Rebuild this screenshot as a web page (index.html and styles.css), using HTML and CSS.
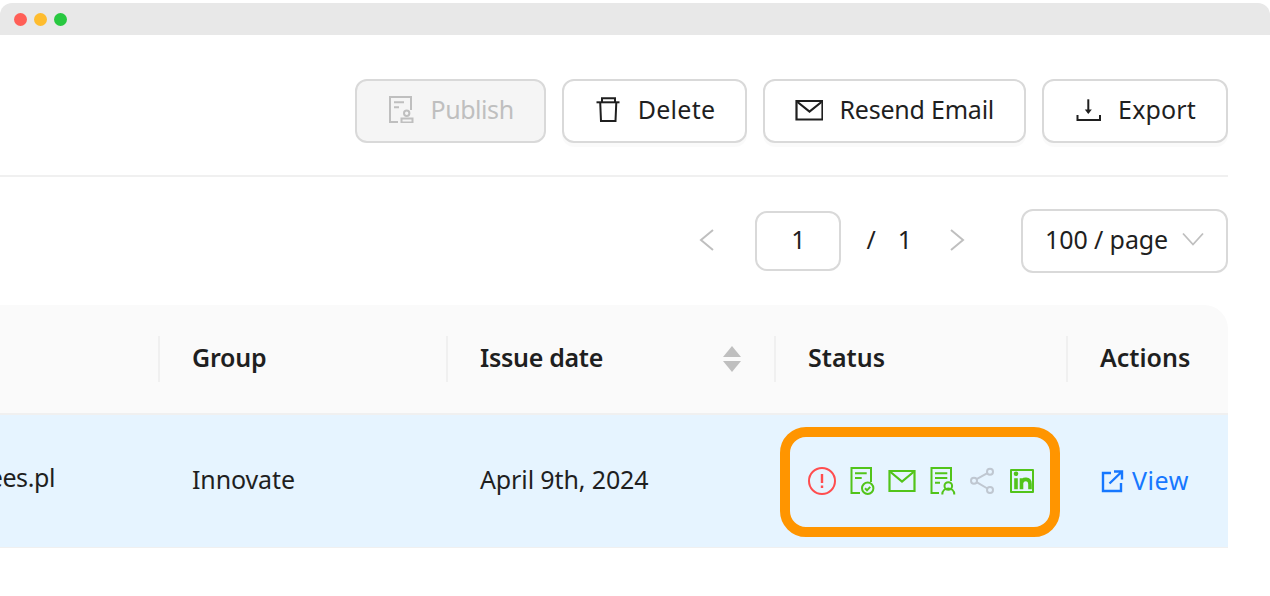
FILE: index.html
```html
<!DOCTYPE html>
<html lang="en">
<head>
<meta charset="utf-8">
<title>Certificates</title>
<link rel="stylesheet" href="styles.css">
</head>
<body>
<div class="titlebar">
  <span class="light light-red"></span>
  <span class="light light-yellow"></span>
  <span class="light light-green"></span>
</div>
<main class="content">
  <div class="toolbar">
    <button class="btn btn-disabled">
      <svg class="icon" viewBox="-1 -1 28 28" fill="none" stroke="currentColor" stroke-width="2"><path d="M10 26H2V1h21v13"/><path d="M6 6.300h10M6 11.300h5"/><circle cx="18.700" cy="17.300" r="2.700"/><path d="M13.500 22.500h11v4h-11z"/></svg>
      <span class="t-publish">Publish</span>
    </button>
    <button class="btn">
      <svg class="icon" viewBox="-1 -1 28 28" fill="none" stroke="currentColor" stroke-width="2"><path d="M1.500 6.300h23"/><path d="M7 6.300V2.300h13v4"/><path d="M5.200 6.300L6 25h14.500l.8-18.700"/></svg>
      <span class="t-delete">Delete</span>
    </button>
    <button class="btn">
      <svg class="icon" viewBox="-1 -1 28 28" fill="none" stroke="currentColor" stroke-width="2.200"><path d="M.5 5h26v18.500H.5z"/><path d="M1.500 6l12 9.500 12-9.500"/></svg>
      <span class="t-resend">Resend Email</span>
    </button>
    <button class="btn">
      <svg class="icon" viewBox="-1 -1 28 28" fill="none" stroke="currentColor" stroke-width="2"><path d="M13.300 3.300v13"/><path d="M9.800 13.500h7l-3.500 4.500z" fill="currentColor" stroke="none"/><path d="M2.500 19v5h22.500v-5"/></svg>
      <span class="t-export">Export</span>
    </button>
  </div>
  <hr class="divider">
  <div class="pagination">
    <svg class="chev" viewBox="0 0 28 28" fill="none" stroke="currentColor" stroke-width="2"><path d="M20 4L8 14l12 10"/></svg>
    <div class="page-input">1</div>
    <span class="page-sep">/</span>
    <span class="page-total">1</span>
    <svg class="chev chev-next" viewBox="0 0 28 28" fill="none" stroke="currentColor" stroke-width="2"><path d="M8 4l12 10L8 24"/></svg>
    <div class="page-size">
      <span class="t-size">100 / page</span>
      <svg class="size-caret" viewBox="0 0 22 14" fill="none" stroke="currentColor" stroke-width="1.800"><path d="M1 1.500l10 11 10-11"/></svg>
    </div>
  </div>
  <div class="table">
    <div class="thead">
      <div class="th"></div>
      <div class="th t-group">Group</div>
      <div class="th th-sort"><span class="t-issue">Issue date</span>
        <span class="sorter"><i class="caret-up"></i><i class="caret-down"></i></span>
      </div>
      <div class="th">Status</div>
      <div class="th th-last">Actions</div>
    </div>
    <div class="trow">
      <div class="td td-email">ees.pl</div>
      <div class="td t-body">Innovate</div>
      <div class="td t-body">April 9th, 2024</div>
      <div class="td td-status">
        <svg class="st" viewBox="0 0 28 28" fill="none" stroke="#ff4d4f" stroke-width="2"><circle cx="14" cy="14" r="13"/><path d="M14 7v9" stroke-width="2.400"/><path d="M14 18.500v2.500" stroke-width="2.400"/></svg>
        <svg class="st" viewBox="0 0 28 28" fill="none" stroke="#52c41a" stroke-width="2"><path d="M12 26H3.500V1h19.500v14"/><path d="M7 6.300h11.700M7 11h6.700"/><circle cx="19.700" cy="21.300" r="5.700"/><path d="M17 21.300l2 2 3.200-3.500"/></svg>
        <svg class="st" viewBox="0 0 28 28" fill="none" stroke="#52c41a" stroke-width="2.200"><path d="M1.500 4h25v20h-25z"/><path d="M2.500 5l11.500 9.500L25.500 5"/></svg>
        <svg class="st" viewBox="0 0 28 28" fill="none" stroke="#52c41a" stroke-width="2"><path d="M11 26H3.500V1h19.500v13"/><path d="M7 6.300h12.300M7 11h12.300M7 15.700h5"/><circle cx="20.300" cy="19" r="3.800"/><path d="M14.300 27.500c0-8 12-8 12 0"/></svg>
        <svg class="st" viewBox="0 0 28 28" fill="none" stroke="#bfc7d1" stroke-width="2"><circle cx="22" cy="4.700" r="3"/><circle cx="6" cy="13.700" r="3"/><circle cx="22" cy="23" r="3"/><path d="M19.400 6.200L8.600 12.200M8.600 15.200l10.800 6.300"/></svg>
        <svg class="st" viewBox="0 0 28 28" fill="none" stroke="#52c41a" stroke-width="2"><path d="M3 3h22v22H3z" stroke-linejoin="round"/><path d="M8 11.300v11M13.500 22.300v-11M13.500 16c1-5 8.500-5 8.500 1v5.300" stroke-width="3.600"/><circle cx="8" cy="6.800" r="2.300" fill="#52c41a" stroke="none"/></svg>
        <span class="highlight"></span>
      </div>
      <div class="td">
        <a class="view-link" href="#">
          <svg class="view-icon" viewBox="0 0 24 24" fill="none" stroke="currentColor" stroke-width="2.400"><path d="M11 4H3v18h18v-8"/><path d="M9.500 14.500L22 2.500M14 2.500h8v8"/></svg>
          <span class="t-view">View</span>
        </a>
      </div>
    </div>
  </div>
</main>
</body>
</html>
```
FILE: styles.css
```css
* { box-sizing: border-box; }
html, body { margin: 0; padding: 0; height: 100%; overflow: hidden; background: #fff; }
body {
  font-family: "Noto Sans", "Liberation Sans", sans-serif;
  font-size: 25px;
  color: #1f1f1f;
  padding-top: 3px;
}
.titlebar {
  height: 32px;
  background: #e8e8e8;
  border-radius: 12px 12px 0 0;
  display: flex;
  align-items: center;
  gap: 7px;
  padding-left: 14px;
}
.light { width: 13px; height: 13px; border-radius: 50%; }
.light-red { background: #ff5f57; }
.light-yellow { background: #febc2e; }
.light-green { background: #28c840; }
.content { padding-right: 42px; }
.toolbar {
  display: flex;
  justify-content: flex-end;
  gap: 16px;
  margin-top: 44px;
}
.btn {
  height: 64px;
  display: flex;
  align-items: center;
  gap: 16px;
  padding: 0 30px 4px;
  border: 2px solid #d9d9d9;
  border-radius: 12px;
  background: #fff;
  color: #1f1f1f;
  font: inherit;
  box-shadow: 0 4px 0 rgba(0, 0, 0, 0.02);
}
.btn-disabled { background: #f5f5f5; color: #bfbfbf; box-shadow: none; }
.icon { width: 28px; height: 28px; flex: none; }
.t-publish { letter-spacing: -0.45px; }
.t-delete { letter-spacing: 0.3px; }
.t-resend { letter-spacing: -0.22px; }
.t-export { letter-spacing: 0.15px; }
.divider { border: 0; height: 2px; background: #f0f0f0; margin: 32px 0; }
.pagination { display: flex; justify-content: flex-end; align-items: center; height: 64px; }
.chev { width: 28px; height: 28px; color: #bfbfbf; flex: none; margin-bottom: 2px; }
.chev-next { margin-left: 31px; }
.page-input {
  width: 86px;
  height: 60px;
  margin-left: 34px;
  padding-bottom: 4px;
  border: 2px solid #d9d9d9;
  border-radius: 12px;
  display: flex;
  align-items: center;
  justify-content: center;
}
.page-sep { margin-left: 25px; padding-bottom: 4px; }
.page-total { margin-left: 22px; padding-bottom: 4px; }
.page-size {
  width: 207px;
  height: 64px;
  margin-left: 50px;
  padding: 0 22px 4px;
  border: 2px solid #d9d9d9;
  border-radius: 12px;
  display: flex;
  align-items: center;
  justify-content: space-between;
}
.t-size { letter-spacing: -0.1px; }
.size-caret { width: 22px; height: 14px; color: #bfbfbf; }
.table { margin-top: 32px; }
.thead, .trow {
  display: grid;
  grid-template-columns: 160px 288px 328px 292px 160px;
}
.thead {
  height: 110px;
  background: #fafafa;
  border-radius: 0 24px 0 0;
  border-bottom: 2px solid #f0f0f0;
}
.th {
  position: relative;
  display: flex;
  align-items: center;
  padding-left: 32px;
  padding-bottom: 4px;
  font-weight: 600;
}
.th::after {
  content: "";
  position: absolute;
  right: 0;
  top: 31px;
  height: 46px;
  width: 2px;
  background: #f0f0f0;
}
.th-last::after { display: none; }
.th-sort { justify-content: space-between; padding-right: 35px; }
.t-group { letter-spacing: -0.2px; }
.t-issue { letter-spacing: -0.3px; }
.sorter { display: flex; flex-direction: column; gap: 4px; margin-top: 4px; }
.caret-up, .caret-down { width: 0; height: 0; border-left: 9px solid transparent; border-right: 9px solid transparent; }
.caret-up { border-bottom: 11px solid #bfbfbf; }
.caret-down { border-top: 11px solid #bfbfbf; }
.trow {
  height: 133px;
  background: #e6f4ff;
  border-bottom: 1px solid #f0f0f0;
}
.td { display: flex; align-items: center; padding-left: 32px; }
.t-body { letter-spacing: -0.12px; padding-bottom: 4px; }
.td-email {
  padding: 0 105px 8px 0;
  justify-content: flex-end;
  letter-spacing: -0.4px;
  overflow: hidden;
}
.td-status { position: relative; gap: 12px; }
.st { width: 28px; height: 28px; flex: none; }
.highlight {
  position: absolute;
  left: 4px;
  top: 12px;
  width: 280px;
  height: 110px;
  border: 10px solid #ff9500;
  border-radius: 26px;
}
.view-link { display: flex; align-items: center; gap: 8px; color: #1677ff; text-decoration: none; }
.view-icon { width: 24px; height: 24px; flex: none; }
.t-view { letter-spacing: 0.55px; margin-bottom: 3px; }
```
